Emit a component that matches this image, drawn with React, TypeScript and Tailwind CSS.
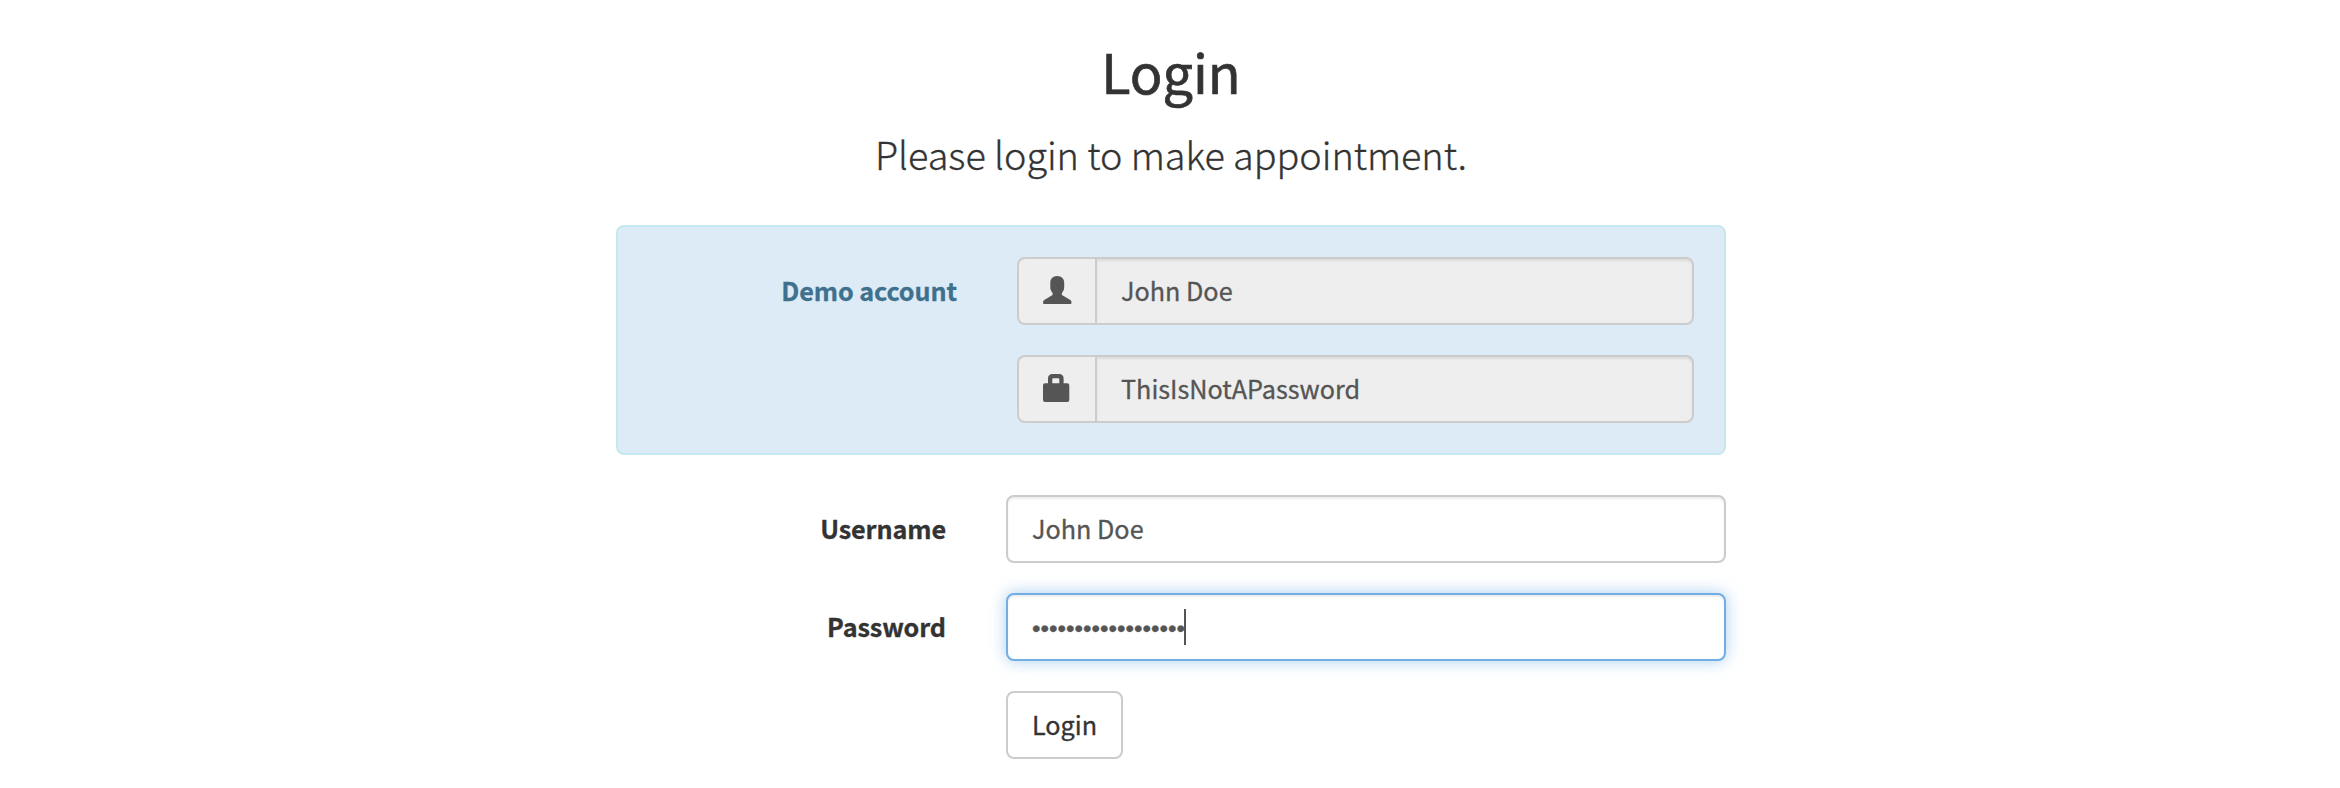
import type { ReactNode } from "react";

function UserIcon() {
  return (
    <svg width="29" height="28" viewBox="0 0 29 28" fill="#555555">
      <path d="M14.2 0C9.6 0 7.3 3 7.3 6.6v4.6c0 2.1.7 3.6 1.6 4.7.6.7.8 1.300.8 2 0 .8-.3 1.200-1 1.600L1.600 23.700C.6 24.300.1 24.900.1 25.700V27.200c0 .5.3.8.8.8h26.700c.5 0 .8-.3.8-.8v-1.500c0-.8-.5-1.400-1.500-2L19.800 19.500c-.7-.4-1-.8-1-1.600 0-.7.2-1.300.8-2 .9-1.100 1.600-2.600 1.600-4.700V6.600C21.200 3 18.800 0 14.200 0z" />
    </svg>
  );
}

function LockIcon() {
  return (
    <svg width="29" height="28" viewBox="0 0 29 28" fill="#555555">
      <path
        fillRule="evenodd"
        d="M9.200 0h7.200a4.200 4.200 0 0 1 4.200 4.200V9.300h3.700a2 2 0 0 1 2 2V26a2 2 0 0 1-2 2H2a2 2 0 0 1-2-2V11.300a2 2 0 0 1 2-2h3V4.200A4.200 4.200 0 0 1 9.200 0zM10.300 4.200a1 1 0 0 0-1 1V9.300h7V5.200a1 1 0 0 0-1-1z"
      />
    </svg>
  );
}

function DemoField({ icon, value }: { icon: ReactNode; value: string }) {
  return (
    <div className="flex h-[68px] w-[677px]">
      <div className="flex w-[78px] items-center rounded-l-lg border-2 border-r-0 border-[#cccccc] bg-[#eeeeee] pb-[2px] pl-6">
        {icon}
      </div>
      <input
        readOnly
        value={value}
        className="min-w-0 flex-1 rounded-r-lg border-2 border-[#cccccc] bg-[#eeeeee] px-6 pb-[2px] text-[25.2px] text-[#555555] shadow-[inset_0_2px_2px_rgba(0,0,0,0.075)] outline-none"
      />
    </div>
  );
}

export default function App() {
  return (
    <main className="flex h-[788px] w-full flex-col items-center overflow-hidden bg-white pl-[2px] font-['Noto_Sans_CJK_SC',sans-serif] text-[25.2px] leading-[40px] text-[#333333] [-webkit-text-stroke:0.3px]">
      <h1 className="mt-[38px] text-[54px] leading-[66px] font-normal [-webkit-text-stroke:0.7px]">Login</h1>
      <p className="mt-[20px] text-[37.8px] leading-[60px] font-light tracking-[-0.05px]">
        Please login to make appointment.
      </p>
      <form className="mt-[41px] w-[1110px]">
        <section className="flex h-[230px] rounded-lg border-2 border-[#c3e8f0] bg-[#ddebf6] pt-[30px]">
          <label className="mt-[13px] w-[339px] text-right font-bold tracking-[-0.1px] text-[#3f718f]">
            Demo account
          </label>
          <div className="ml-[60px] flex flex-col gap-[30px]">
            <DemoField icon={<UserIcon />} value="John Doe" />
            <DemoField icon={<LockIcon />} value="ThisIsNotAPassword" />
          </div>
        </section>
        <div className="mt-10 flex h-[68px] items-center">
          <label className="w-[330px] pb-[2px] text-right font-bold tracking-[-0.1px]">Username</label>
          <input
            readOnly
            value="John Doe"
            className="ml-[60px] h-[68px] w-[720px] rounded-lg border-2 border-[#cccccc] bg-white px-6 pb-[2px] text-[#555555] shadow-[inset_0_2px_2px_rgba(0,0,0,0.075)] outline-none"
          />
        </div>
        <div className="mt-[30px] flex h-[68px] items-center">
          <label className="w-[330px] pb-[2px] text-right font-bold tracking-[-0.1px]">Password</label>
          <div className="ml-[60px] flex h-[68px] w-[720px] items-center rounded-lg border-2 border-[#72ade4] bg-white px-6 text-[#555555] shadow-[inset_0_2px_2px_rgba(0,0,0,0.075),0_0_16px_rgba(114,173,228,0.6)]">
            <span className="pt-[4px] font-['Liberation_Sans',sans-serif] text-[24.3px]">••••••••••••••••••</span>
            <span className="-ml-px h-9 w-[2px] bg-[#555555]" />
          </div>
        </div>
        <button
          type="button"
          className="mt-[30px] ml-[390px] flex h-[68px] w-[117px] items-center justify-center rounded-lg border-2 border-[#cccccc] bg-white pb-[2px]"
        >
          Login
        </button>
      </form>
    </main>
  );
}
